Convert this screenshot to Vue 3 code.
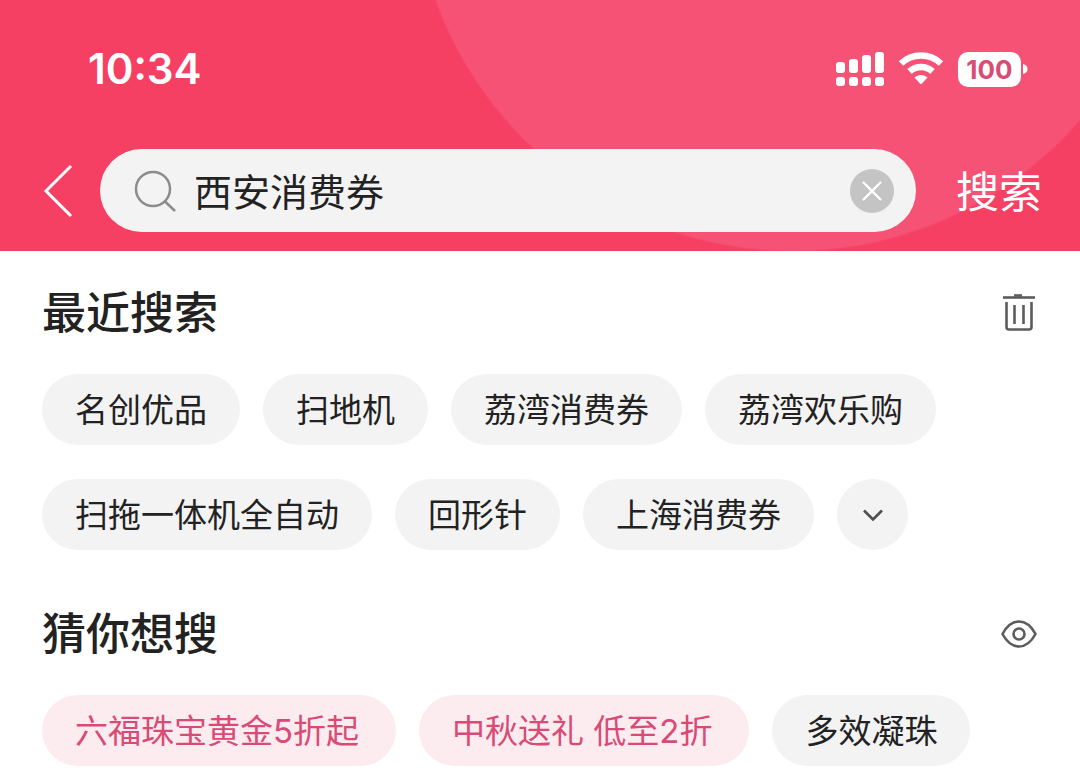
<script setup>
import { ref } from 'vue'

const query = ref('西安消费券')
const recent = ['名创优品', '扫地机', '荔湾消费券', '荔湾欢乐购', '扫拖一体机全自动', '回形针', '上海消费券']
const guesses = [
  { text: '六福珠宝黄金5折起', hot: true },
  { text: '中秋送礼 低至2折', hot: true },
  { text: '多效凝珠', hot: false }
]
const signalBars = [
  { x: 0, y: 10, h: 11 },
  { x: 13, y: 7, h: 14 },
  { x: 26, y: 3, h: 18 },
  { x: 39, y: 0, h: 21 }
]
</script>

<template>
  <div class="page">
    <header class="top">
      <div class="status">
        <span class="time">10:34</span>
        <div class="indicators">
          <svg class="signal" width="48" height="35" viewBox="0 0 48 35" aria-hidden="true">
            <g v-for="bar in signalBars" :key="bar.x" fill="#fff">
              <rect :x="bar.x" :y="bar.y" width="9" :height="bar.h" rx="3" />
              <rect :x="bar.x" y="25" width="9" height="9" rx="3" />
            </g>
          </svg>
          <svg class="wifi" width="46" height="35" viewBox="0 0 46 35" aria-hidden="true">
            <g fill="none" stroke="#fff" stroke-width="6.500">
              <path d="M3 11.500A29 29 0 0 1 43 11.500" />
              <path d="M11.500 19.500A17 17 0 0 1 34.500 19.500" />
            </g>
            <path d="M16.500 25.500C20 22 26 22 29.500 25.500L24 31.500Q23 32.500 22 31.500Z" fill="#fff" />
          </svg>
          <div class="battery">
            <span class="level">100</span>
            <svg width="5" height="10" viewBox="0 0 5 10" aria-hidden="true">
              <path d="M0 0C6 1 6 9 0 10Z" fill="#fff" />
            </svg>
          </div>
        </div>
      </div>
      <form class="search" @submit.prevent>
        <button class="back" type="button" aria-label="返回">
          <svg width="30" height="54" viewBox="0 0 30 54" aria-hidden="true">
            <path d="M28 2L3 27L28 52" fill="none" stroke="#fff" stroke-width="3" />
          </svg>
        </button>
        <div class="field">
          <svg width="42" height="42" viewBox="0 0 42 42" aria-hidden="true">
            <g fill="none" stroke="#8c8c8c" stroke-width="2.500">
              <circle cx="19" cy="19" r="17" />
              <path d="M30.500 31L41 41" />
            </g>
          </svg>
          <input v-model="query" type="text" aria-label="搜索内容" />
          <button class="clear" type="button" aria-label="清除" @click="query = ''">
            <svg width="44" height="44" viewBox="0 0 44 44" aria-hidden="true">
              <circle cx="22" cy="22" r="22" fill="#c4c4c4" />
              <path d="M13 13L31 31M31 13L13 31" stroke="#fff" stroke-width="2.400" />
            </svg>
          </button>
        </div>
        <button class="submit" type="submit">搜索</button>
      </form>
    </header>

    <main>
      <section>
        <div class="heading">
          <h2>最近搜索</h2>
          <button class="tool" type="button" aria-label="清空最近搜索">
            <svg width="36" height="40" viewBox="0 0 36 40" aria-hidden="true">
              <g fill="none" stroke="#5c5c5c" stroke-width="2.600">
                <path d="M2 4.500H34" />
                <path d="M13 2.500H21" />
                <path d="M5.500 9V34Q5.500 36.500 8 36.500H28Q30.500 36.500 30.500 34V9" />
                <path d="M13.500 12V31M22.500 12V31" />
              </g>
            </svg>
          </button>
        </div>
        <div class="chips">
          <button v-for="item in recent" :key="item" class="chip" type="button">{{ item }}</button>
          <button class="more" type="button" aria-label="展开更多">
            <svg width="20" height="12" viewBox="0 0 20 12" aria-hidden="true">
              <path d="M1 1.500L10 10.500L19 1.500" fill="none" stroke="#505050" stroke-width="2.600" />
            </svg>
          </button>
        </div>
      </section>

      <section>
        <div class="heading">
          <h2>猜你想搜</h2>
          <button class="tool" type="button" aria-label="隐藏推荐">
            <svg width="36" height="28" viewBox="0 0 36 28" aria-hidden="true">
              <g fill="none" stroke="#5c5c5c" stroke-width="2.600">
                <path d="M1.500 14C5 7.500 11 1.500 18 1.500S31 7.500 34.500 14C31 20.500 25 26.500 18 26.500S5 20.500 1.500 14Z" />
                <circle cx="18" cy="14" r="5.500" />
              </g>
            </svg>
          </button>
        </div>
        <div class="chips">
          <button v-for="item in guesses" :key="item.text" class="chip" :class="{ hot: item.hot }" type="button">{{ item.text }}</button>
        </div>
      </section>
    </main>
  </div>
</template>

<style>
body {
  margin: 0;
  background: #fff;
}
</style>

<style scoped>
.page {
  font-family: Inter, "Noto Sans CJK SC", sans-serif;
  color: #222;
}

button {
  border: 0;
  padding: 0;
  background: none;
  color: inherit;
  font: inherit;
  cursor: pointer;
}

svg {
  display: block;
  flex: none;
}

.top {
  padding-bottom: 19px;
  background: radial-gradient(circle at calc(100% - 287px) -129px, #f65275 379px, #f64063 381px);
  color: #fff;
}

.status {
  display: flex;
  align-items: center;
  justify-content: space-between;
  padding: 44px 52px 55px 88px;
}

.time {
  font-size: 42px;
  font-weight: 600;
  line-height: 50px;
}

.indicators {
  display: flex;
  align-items: center;
  gap: 14px;
}

.battery {
  display: flex;
  align-items: center;
  gap: 2px;
}

.level {
  width: 63px;
  border-radius: 10px;
  background: #fff;
  color: #d94d74;
  font-size: 26px;
  font-weight: 700;
  line-height: 35px;
  text-align: center;
}

.search {
  display: flex;
  align-items: center;
  padding: 0 38px 0 43px;
}

.field {
  display: flex;
  flex: 1;
  align-items: center;
  min-width: 0;
  height: 83px;
  box-sizing: border-box;
  margin: 0 40px 0 27px;
  padding: 0 22px 0 34px;
  border-radius: 42px;
  background: #f3f3f3;
}

input {
  flex: 1;
  min-width: 0;
  padding: 2px 0 0 18px;
  border: 0;
  outline: 0;
  background: none;
  color: #222;
  font: inherit;
  font-size: 38px;
  line-height: 56px;
}

.submit {
  padding-top: 2px;
  font-size: 43px;
  line-height: 60px;
}

main {
  padding: 30px 42px 8px;
}

section + section {
  margin-top: 52px;
}

.heading {
  display: flex;
  align-items: center;
  justify-content: space-between;
  margin-bottom: 29px;
  padding-right: 1px;
}

h2 {
  margin: 0;
  font-size: 44px;
  font-weight: 500;
  line-height: 64px;
}

.chips {
  display: flex;
  flex-wrap: wrap;
  gap: 34px 23px;
}

.chip {
  padding: 2px 33px 0;
  border-radius: 36px;
  background: #f3f3f3;
  font-size: 33px;
  line-height: 69px;
  white-space: nowrap;
}

.hot {
  padding-right: 37px;
  background: #fdecef;
  color: #d94b76;
}

.more {
  display: grid;
  place-items: center;
  width: 71px;
  height: 71px;
  border-radius: 50%;
  background: #f3f3f3;
}
</style>
